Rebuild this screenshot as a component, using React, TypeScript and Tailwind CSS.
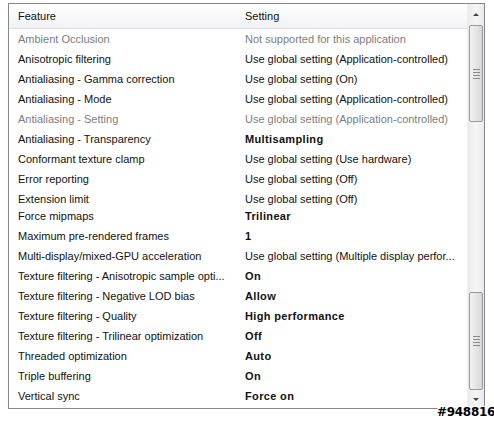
import React from "react";

type Row = { f: string; s: string; dim?: boolean; bold?: boolean };

const top: Row[] = [
  { f: "Ambient Occlusion", s: "Not supported for this application", dim: true },
  { f: "Anisotropic filtering", s: "Use global setting (Application-controlled)" },
  { f: "Antialiasing - Gamma correction", s: "Use global setting (On)" },
  { f: "Antialiasing - Mode", s: "Use global setting (Application-controlled)" },
  { f: "Antialiasing - Setting", s: "Use global setting (Application-controlled)", dim: true },
  { f: "Antialiasing - Transparency", s: "Multisampling", bold: true },
  { f: "Conformant texture clamp", s: "Use global setting (Use hardware)" },
  { f: "Error reporting", s: "Use global setting (Off)" },
  { f: "Extension limit", s: "Use global setting (Off)" },
];

const bottom: Row[] = [
  { f: "Force mipmaps", s: "Trilinear", bold: true },
  { f: "Maximum pre-rendered frames", s: "1", bold: true },
  { f: "Multi-display/mixed-GPU acceleration", s: "Use global setting (Multiple display perfor..." },
  { f: "Texture filtering - Anisotropic sample opti...", s: "On", bold: true },
  { f: "Texture filtering - Negative LOD bias", s: "Allow", bold: true },
  { f: "Texture filtering - Quality", s: "High performance", bold: true },
  { f: "Texture filtering - Trilinear optimization", s: "Off", bold: true },
  { f: "Threaded optimization", s: "Auto", bold: true },
  { f: "Triple buffering", s: "On", bold: true },
  { f: "Vertical sync", s: "Force on", bold: true },
];

function RowView({ r }: { r: Row }) {
  return (
    <div className="flex h-[20px] shrink-0 items-center whitespace-nowrap">
      <div className={`w-[232px] pl-[9px] ${r.dim ? "text-[#7d7d7d]" : "text-[#111]"}`}>{r.f}</div>
      <div
        className={`pl-[4px] ${r.dim ? "text-[#7d7d7d]" : "text-[#111]"} ${
          r.bold ? "font-bold tracking-[0.35px]" : ""
        }`}
      >
        {r.s}
      </div>
    </div>
  );
}

function Grip() {
  return (
    <div className="flex flex-col gap-[2px]">
      <div className="h-px w-[7px] bg-[#8a8a8a]" />
      <div className="h-px w-[7px] bg-[#8a8a8a]" />
      <div className="h-px w-[7px] bg-[#8a8a8a]" />
      <div className="h-px w-[7px] bg-[#8a8a8a]" />
    </div>
  );
}

function Thumb({ h }: { h: string }) {
  return (
    <div
      className={`${h} mx-[1px] flex items-center justify-center rounded-[2px] border border-[#9b9b9b] bg-gradient-to-r from-[#f2f2f2] via-[#e6e6e6] to-[#d6d6d6]`}
    >
      <Grip />
    </div>
  );
}

export default function App() {
  return (
    <div
      className="relative h-[421px] w-[494px] overflow-hidden bg-white text-[11px]"
      style={{ fontFamily: '"Liberation Sans", Arial, sans-serif' }}
    >
      {/* top panel */}
      <div className="ml-[8px] mt-[3px] flex h-[203px] w-[477px] border border-b-0 border-[#828790]">
        <div className="flex min-w-0 flex-1 flex-col overflow-hidden">
          <div className="flex h-[25px] shrink-0 items-center border-b border-[#e2e2e2] bg-gradient-to-b from-white to-[#f1f2f4] text-[#111]">
            <div className="w-[232px] pl-[9px]">Feature</div>
            <div className="pl-[4px]">Setting</div>
          </div>
          {top.map((r, i) => (
            <RowView key={i} r={r} />
          ))}
        </div>
        <div className="flex w-[17px] shrink-0 flex-col border-l border-[#f0f0f0] bg-gradient-to-r from-[#eaeaea] via-[#f6f6f6] to-[#eaeaea]">
          <div className="flex h-[21px] shrink-0 items-center justify-center">
            <div className="h-0 w-0 border-x-[3px] border-b-[3px] border-x-transparent border-b-[#444]" />
          </div>
          <Thumb h="h-[97px]" />
        </div>
      </div>

      {/* bottom panel */}
      <div className="ml-[8px] flex h-[203px] w-[477px] border border-t-0 border-[#828790]">
        <div className="flex min-w-0 flex-1 flex-col overflow-hidden">
          {bottom.map((r, i) => (
            <RowView key={i} r={r} />
          ))}
        </div>
        <div className="flex w-[17px] shrink-0 flex-col border-l border-[#f0f0f0] bg-gradient-to-r from-[#eaeaea] via-[#f6f6f6] to-[#eaeaea]">
          <div className="h-[86px] shrink-0" />
          <Thumb h="h-[98px]" />
          <div className="flex flex-1 items-center justify-center">
            <div className="h-0 w-0 border-x-[3px] border-t-[3px] border-x-transparent border-t-[#444]" />
          </div>
        </div>
      </div>

      {/* watermark */}
      <div
        className="absolute left-[437px] top-[403px] text-[12px] font-bold tracking-[-0.3px] text-black"
        style={{
          fontFamily: '"DejaVu Sans", sans-serif',
          textShadow:
            "1px 0 0 #fff, -1px 0 0 #fff, 0 1px 0 #fff, 0 -1px 0 #fff, 1px 1px 0 #fff, -1px -1px 0 #fff, 1px -1px 0 #fff, -1px 1px 0 #fff",
        }}
      >
        #948816
      </div>
    </div>
  );
}
